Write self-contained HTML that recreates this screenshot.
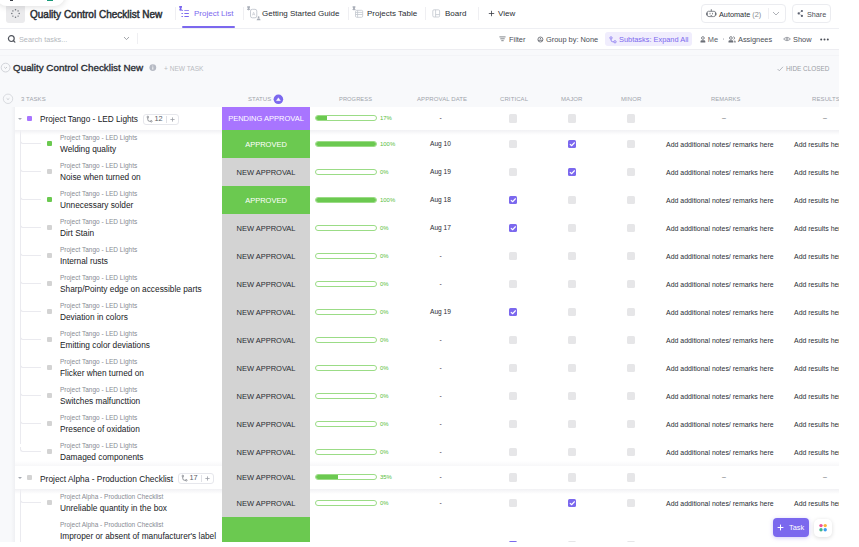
<!DOCTYPE html>
<html><head><meta charset="utf-8"><style>*{box-sizing:border-box;margin:0;padding:0}
html,body{width:859px;height:547px;overflow:hidden;background:#fff;font-family:"Liberation Sans",sans-serif;color:#2a2e34}
#app{position:absolute;left:0;top:0;width:839px;height:542px;overflow:hidden;background:#f8f9fb}
.abs{position:absolute;white-space:nowrap}
#top{position:absolute;left:0;top:0;width:839px;height:29px;background:#fff;border-bottom:1px solid #eeeff3}
#tool{position:absolute;left:0;top:29px;width:839px;height:21px;background:#fff;border-bottom:1px solid #ededf1}
.t8{font-size:8px;line-height:10px}
.vsep{position:absolute;width:1px;background:#efeff2}
#table{position:absolute;left:0;top:0;width:839px;height:542px}
.row{position:absolute;left:15px;width:824px;background:#fff}
.grp{}
.gshadow{position:absolute;z-index:1;left:15px;width:824px;height:5px;background:linear-gradient(#f1f1f4,rgba(255,255,255,0))}
.gshadow2{position:absolute;z-index:1;left:15px;width:824px;height:5px;background:linear-gradient(rgba(255,255,255,0),#f7f7f9)}
.vline{position:absolute;left:20px;width:1px;background:#eaeaef}
.tree{position:absolute;left:20px;width:21px;border-left:1px solid #eaeaef;border-bottom:1px solid #eaeaef;border-bottom-left-radius:3px}
.tree2{position:absolute;left:20px;width:1px;border-left:1px solid #eaeaef}
.sq{position:absolute;width:5px;height:5px;border-radius:1px}
.gsq{position:absolute;left:27px;width:5px;height:5px;border-radius:1px}
.caret{position:absolute;left:17.8px;width:0;height:0;border-left:2.4px solid transparent;border-right:2.4px solid transparent;border-top:2.8px solid #a4a8b0}
.sub{position:absolute;left:60px;font-size:6.5px;line-height:8px;color:#878b93;white-space:nowrap}
.tname{position:absolute;left:60px;font-size:8.3px;line-height:10px;color:#202226;white-space:nowrap}
.gname{position:absolute;left:40px;font-size:8.35px;line-height:10px;color:#202226;white-space:nowrap}
.badge{position:absolute;height:11px;border:0.8px solid #e6e7ec;border-radius:3px;background:#fff}
.bn{position:absolute;font-size:7.4px;line-height:8px;color:#5a5e66;white-space:nowrap}
.bs{position:absolute;width:0.8px;height:7px;background:#e0e1e6}
.st{position:absolute;z-index:2;left:222px;width:88px;text-align:center;font-size:7.5px;display:flex;align-items:center;justify-content:center;white-space:nowrap}
.pb{position:absolute;left:315px;width:62px;height:6px;border:0.8px solid #9bdc86;border-radius:3px;background:#fff;overflow:hidden}
.pbf{height:100%;background:#6bc950}
.pct{position:absolute;left:380px;font-size:5.95px;line-height:8px;color:#58bd3c;white-space:nowrap}
.date{position:absolute;left:400px;width:81px;text-align:center;font-size:6.6px;line-height:8px;color:#2a2e34;white-space:nowrap}
.cb{position:absolute;width:8.4px;height:8.4px;border-radius:1.5px;background:#e6e6e8}
.cb.on{background:#7b68ee}
.cb svg{position:absolute;left:0;top:0;width:8.5px;height:8.5px}
.rem{position:absolute;margin-top:0.5px;left:666px;font-size:6.95px;line-height:8px;color:#2a2e34;white-space:nowrap}
.res{position:absolute;margin-top:0.5px;left:794px;font-size:6.95px;line-height:8px;color:#2a2e34;white-space:nowrap}
.dash{position:absolute;font-size:7px;line-height:8px;color:#6c7077}
.hdr{position:absolute;top:95px;font-size:6px;line-height:8px;color:#a0a4ab;white-space:nowrap;letter-spacing:0.1px}
.ic{position:absolute;overflow:visible}
</style></head>
<body>
<div id="app">
  <div id="top">
    <div style="position:absolute;left:6px;top:4px;width:19px;height:19px;border-radius:3px;background:#ebebed"></div>
    <svg class="ic" style="left:10px;top:8px" width="11" height="11" viewBox="0 0 11 11"><g fill="#6a6e76"><circle cx="5.5" cy="1.8" r="0.75"/><circle cx="5.5" cy="9.2" r="0.75"/><circle cx="1.8" cy="5.5" r="0.75"/><circle cx="9.2" cy="5.5" r="0.75"/><circle cx="2.9" cy="2.9" r="0.7"/><circle cx="8.1" cy="2.9" r="0.7"/><circle cx="2.9" cy="8.1" r="0.7"/><circle cx="8.1" cy="8.1" r="0.7"/></g></svg>
    <div class="abs" style="left:30px;top:9px;font-size:10px;line-height:11px;-webkit-text-stroke:0.45px #2a2e34;color:#2a2e34">Quality Control Checklist New</div>
    <div class="vsep" style="left:175px;top:7px;height:13px"></div>
    <svg class="ic" style="left:178px;top:5px" width="12" height="13" viewBox="0 0 12 13"><g fill="#7b68ee"><path d="M1.2 1 H4 V2.2 L3.4 3.3 V4.6 H4.2 V5.3 H3 L2.6 6.2 L2.2 5.3 H1 V4.6 H1.8 V3.3 L1.2 2.2Z"/><rect x="3.3" y="5.2" width="1.8" height="0.9" rx="0.4"/><rect x="3.3" y="8.1" width="1.8" height="0.9" rx="0.4"/><rect x="3.3" y="11" width="1.8" height="0.9" rx="0.4"/><rect x="6.2" y="5.2" width="4.8" height="0.9" rx="0.4"/><rect x="6.2" y="8.1" width="4.8" height="0.9" rx="0.4"/><rect x="6.2" y="11" width="4.8" height="0.9" rx="0.4"/></g></svg>
    <div class="abs t8" style="left:194px;top:9px;color:#7b68ee">Project List</div>
    <div style="position:absolute;left:182px;top:26px;width:53px;height:2px;border-radius:1px;background:#7b68ee"></div>
    <div class="vsep" style="left:243px;top:7px;height:13px"></div>
    <svg class="ic" style="left:246px;top:5px" width="16" height="16" viewBox="0 0 16 16"><g fill="#a9aeb8"><path d="M1.2 1.2 H4 V2.2 L3.5 3.2 V4.2 H4.2 V4.9 H3 L2.6 5.8 L2.2 4.9 H1 V4.2 H1.7 V3.2 L1.2 2.2Z"/></g><rect x="4.5" y="4.3" width="6.3" height="8.5" rx="1.8" fill="none" stroke="#c2c6ce" stroke-width="0.9"/><path d="M6.4 10.4 L7.6 7.2 L8.9 10.4 M6.8 9.4 H8.5" fill="none" stroke="#c9ccd3" stroke-width="0.7"/><g fill="#a9aeb8"><circle cx="12.6" cy="12.2" r="0.9"/><path d="M10.6 15.2 Q10.8 13.3 12.6 13.3 Q14.4 13.3 14.6 15.2Z"/></g></svg>
    <div class="abs t8" style="left:262px;top:9px">Getting Started Guide</div>
    <div class="vsep" style="left:348px;top:7px;height:13px"></div>
    <svg class="ic" style="left:352px;top:5px" width="12" height="13" viewBox="0 0 12 13"><g fill="#a9aeb8"><path d="M0.6 1.2 H3.4 V2.2 L2.9 3.2 V4.2 H3.6 V4.9 H2.4 L2 5.8 L1.6 4.9 H0.4 V4.2 H1.1 V3.2 L0.6 2.2Z"/></g><g fill="none" stroke="#c2c6ce" stroke-width="0.8"><rect x="3.5" y="5.3" width="7.2" height="7" rx="1.2"/><path d="M3.5 7.4 H10.7 M3.5 9.5 H10.7 M5.6 5.3 V12.3"/></g></svg>
    <div class="abs t8" style="left:367px;top:9px">Projects Table</div>
    <div class="vsep" style="left:425px;top:7px;height:13px"></div>
    <svg class="ic" style="left:432px;top:9px" width="9" height="9" viewBox="0 0 9 9"><g fill="none" stroke="#c2c6ce" stroke-width="0.8"><rect x="0.8" y="0.8" width="6.8" height="7.2" rx="1.2"/><path d="M3.6 0.8 V8 M3.6 5.6 H7.6"/></g></svg>
    <div class="abs t8" style="left:445px;top:9px">Board</div>
    <div class="vsep" style="left:478px;top:7px;height:13px"></div>
    <svg class="ic" style="left:488px;top:10px" width="7" height="7" viewBox="0 0 7 7"><path d="M3.5 0.8 V6.2 M0.8 3.5 H6.2" stroke="#3a3e46" stroke-width="0.8"/></svg><div class="abs t8" style="left:498px;top:9px">View</div>
    <div style="position:absolute;left:701px;top:4px;width:85px;height:19px;border:1px solid #ebecf0;border-radius:4px"></div>
    <svg class="ic" style="left:705.5px;top:8.5px" width="11" height="9" viewBox="0 0 11 9"><g fill="none" stroke="#6e727a"><path d="M2.4 2.3 H8.2 Q9.6 2.3 9.6 4.2 V5.6 Q9.6 7.6 7.6 7.6 H3 Q1 7.6 1 5.6 V4.2 Q1 2.3 2.4 2.3Z" stroke-width="0.85"/><path d="M5.3 2.3 V0.9" stroke-width="0.8"/><path d="M0.9 3.8 V6.2 M9.7 3.8 V6.2" stroke-width="1.5"/></g><circle cx="5.3" cy="0.8" r="0.6" fill="#6e727a"/><g fill="#6e727a"><rect x="3.6" y="3.7" width="0.8" height="1.7" rx="0.3"/><rect x="6.2" y="3.7" width="0.8" height="1.7" rx="0.3"/><rect x="4.5" y="6" width="1.6" height="0.7" rx="0.3"/></g></svg>
    <div class="abs" style="left:719px;top:9.6px;font-size:7.3px;line-height:9px;color:#2a2e34">Automate <span style="color:#878b92">(2)</span></div>
    <div class="vsep" style="left:768px;top:8px;height:11px"></div>
    <svg class="ic" style="left:772px;top:11px" width="8" height="5" viewBox="0 0 8 5"><path d="M1 1 L4 4 L7 1" fill="none" stroke="#9a9ea6" stroke-width="0.8"/></svg>
    <div style="position:absolute;left:792px;top:4px;width:39px;height:19px;border:1px solid #ebecf0;border-radius:4px"></div>
    <svg class="ic" style="left:797px;top:9px" width="7" height="9" viewBox="0 0 7 9"><path d="M1.7 4.4 L4.9 2 M1.7 4.4 L4.9 6.9" stroke="#8a8e96" stroke-width="0.5"/><g fill="#5c6170"><circle cx="1.7" cy="4.4" r="1.15"/><circle cx="4.9" cy="2" r="1.1"/><circle cx="4.9" cy="6.9" r="1.1"/></g></svg>
    <div class="abs" style="left:807px;top:9.6px;font-size:7.2px;line-height:9px;color:#4a4e56">Share</div>
  </div>
  <div style="position:absolute;left:0;top:55px;width:839px;height:1px;background:#f3f4f7"></div>
  <div id="tool">
    <svg class="ic" style="left:7px;top:5px" width="10" height="10" viewBox="0 0 10 10"><circle cx="4.3" cy="4.6" r="2.9" fill="none" stroke="#50545c" stroke-width="1.2"/><path d="M6.4 6.7 L7.9 8.2" stroke="#50545c" stroke-width="1.2" stroke-linecap="round"/></svg>
    <div class="abs" style="left:19px;top:6px;font-size:7.3px;line-height:9px;color:#b4b7bd">Search tasks...</div>
    <svg class="ic" style="left:123px;top:7px" width="7" height="5" viewBox="0 0 7 5"><path d="M1 1 L3.5 3.6 L6 1" fill="none" stroke="#8a8e96" stroke-width="0.8"/></svg>
    <div class="vsep" style="left:137px;top:4px;height:11px"></div>
    <svg class="ic" style="left:499px;top:7px" width="7" height="6" viewBox="0 0 7 6"><path d="M0.8 0.9 H6.2 M1.7 2.8 H5.3 M2.7 4.7 H4.3" stroke="#6e727a" stroke-width="0.85" stroke-linecap="round"/></svg>
    <div class="abs" style="left:509px;top:6px;font-size:7.4px;line-height:9px;color:#4a4e55">Filter</div>
    <svg class="ic" style="left:537px;top:7px" width="7" height="7" viewBox="0 0 7 7"><g fill="none" stroke="#5e626a" stroke-width="0.8"><circle cx="3.4" cy="3.5" r="2.5"/><path d="M1 4.3 H5.8"/></g><path d="M2.5 3.2 L3.4 1.8 L4.3 3.2Z" fill="#5e626a"/></svg>
    <div class="abs" style="left:546px;top:6px;font-size:7.4px;line-height:9px;color:#4a4e55">Group by: None</div>
    <div style="position:absolute;left:605px;top:3px;width:87px;height:14px;border-radius:3px;background:#f0edfd"></div>
    <svg class="ic" style="left:608.5px;top:6.5px" width="9" height="8" viewBox="0 0 9 8"><g fill="none" stroke="#8c7cf0" stroke-width="0.85"><circle cx="2" cy="1.9" r="1.15"/><circle cx="6" cy="5.8" r="1.15"/><path d="M2 3.05 V4 Q2 5.8 3.8 5.8 H4.85"/></g></svg>
    <div class="abs" style="left:619px;top:6px;font-size:7.4px;line-height:9px;color:#7b68ee">Subtasks: Expand All</div>
    <svg class="ic" style="left:699.5px;top:6.5px" width="6" height="7" viewBox="0 0 6 7"><circle cx="2.9" cy="2" r="1.35" fill="none" stroke="#6b6f77" stroke-width="0.85"/><path d="M0.5 6.6 V5.6 Q0.5 4.3 1.8 4.3 H4 Q5.3 4.3 5.3 5.6 V6.6Z" fill="#6b6f77"/></svg>
    <div class="abs" style="left:707.8px;top:6px;font-size:7.4px;line-height:9px;color:#5a5e66">Me</div>
    <div style="position:absolute;left:722.5px;top:9.2px;width:1.5px;height:1.5px;border-radius:1px;background:#c8cbd1"></div>
    <svg class="ic" style="left:727.5px;top:6.5px" width="9" height="7" viewBox="0 0 9 7"><circle cx="2.9" cy="2" r="1.35" fill="none" stroke="#6b6f77" stroke-width="0.85"/><path d="M0.5 6.6 V5.6 Q0.5 4.3 1.8 4.3 H4 Q5.3 4.3 5.3 5.6 V6.6Z" fill="#6b6f77"/><path d="M5.3 0.7 Q6.6 1 6.6 2.1 Q6.6 3.1 5.6 3.4" fill="none" stroke="#6b6f77" stroke-width="0.8"/><path d="M6.2 4.4 Q7.6 4.5 7.6 5.6 V6.6 H6.4Z" fill="#6b6f77"/></svg>
    <div class="abs" style="left:738px;top:6px;font-size:7.4px;line-height:9px;color:#4a4e55">Assignees</div>
    <svg class="ic" style="left:783px;top:7px" width="8" height="6" viewBox="0 0 8 6"><g fill="none" stroke="#8a8e96" stroke-width="0.8"><path d="M0.6 3 Q4 -0.4 7.4 3 Q4 6.4 0.6 3Z"/><circle cx="4" cy="3" r="1"/></g></svg>
    <div class="abs" style="left:793px;top:6px;font-size:7.4px;line-height:9px;color:#4a4e55">Show</div>
    <svg class="ic" style="left:819.8px;top:8.5px" width="9" height="3" viewBox="0 0 9 3"><g fill="#4a4e56"><circle cx="1.2" cy="1.5" r="1"/><circle cx="4.5" cy="1.5" r="1"/><circle cx="7.8" cy="1.5" r="1"/></g></svg>
  </div>
  <svg class="ic" style="left:0px;top:62px" width="12" height="12" viewBox="0 0 12 12"><circle cx="5.6" cy="5.6" r="4.4" fill="none" stroke="#c6c9cf" stroke-width="0.8"/><path d="M4.2 5 L5.6 6.4 L7 5" fill="none" stroke="#b0b4ba" stroke-width="0.7"/></svg>
  <div class="abs" style="left:13px;top:62px;font-size:9.85px;line-height:11px;-webkit-text-stroke:0.35px #2a2e34;color:#2a2e34">Quality Control Checklist New</div>
  <svg class="ic" style="left:149px;top:64px" width="8" height="8" viewBox="0 0 8 8"><circle cx="3.8" cy="3.6" r="3.4" fill="#b6bac4"/><path d="M3.8 3.2 V5.6" stroke="#fff" stroke-width="0.9"/><circle cx="3.8" cy="2.1" r="0.5" fill="#fff"/></svg>
  <div class="abs" style="left:164px;top:64.6px;font-size:6.6px;line-height:8px;color:#b8bbc1">+ NEW TASK</div>
  <svg class="ic" style="left:777px;top:65.5px" width="7" height="6" viewBox="0 0 7 6"><path d="M0.6 3 L2.3 4.8 L6 0.8" fill="none" stroke="#a4a8b0" stroke-width="0.8"/></svg>
  <div class="abs" style="left:786px;top:64.6px;font-size:6.4px;line-height:8px;color:#9a9ea5">HIDE CLOSED</div>
  <svg class="ic" style="left:2px;top:93px" width="12" height="12" viewBox="0 0 12 12"><circle cx="6" cy="5.8" r="4.7" fill="none" stroke="#d0d3d8" stroke-width="0.8"/><path d="M4.6 5.3 L6 6.6 L7.4 5.3" fill="none" stroke="#b8bcc2" stroke-width="0.7"/></svg>
  <div class="hdr" style="left:21px">3 TASKS</div>
  <div class="hdr" style="left:248px">STATUS</div>
  <svg class="ic" style="left:273px;top:94px" width="11" height="11" viewBox="0 0 11 11"><circle cx="5.4" cy="5.3" r="4.8" fill="#7b68ee"/><path d="M3.3 6.7 L5.4 3.7 L7.5 6.7Z" fill="#fff" stroke="#fff" stroke-width="0.3" stroke-linejoin="round"/></svg>
  <div class="hdr" style="left:339px;font-size:5.7px">PROGRESS</div>
  <div class="hdr" style="left:417px">APPROVAL DATE</div>
  <div class="hdr" style="left:500px">CRITICAL</div>
  <div class="hdr" style="left:561px">MAJOR</div>
  <div class="hdr" style="left:621px">MINOR</div>
  <div class="hdr" style="left:711px;font-size:5.8px">REMARKS</div>
  <div class="hdr" style="left:812px">RESULTS</div>
  <div id="table"><div class="row grp" style="top:107px;height:23px"></div><div class="caret" style="top:117.5px"></div><div class="gshadow" style="top:130px"></div><div class="gsq" style="top:116px;background:#a875ff"></div><div class="gname" style="top:114.5px;font-size:8.25px">Project Tango - LED Lights</div><div class="badge" style="left:143px;top:113.5px;width:36px"></div><svg class="ic" style="left:146px;top:116px" width="7" height="7" viewBox="0 0 7 7"><path d="M1.8 1.6 V3.6 Q1.8 5.3 3.6 5.3 H4.6" fill="none" stroke="#70747c" stroke-width="0.75"/><circle cx="1.8" cy="1" r="0.8" fill="#fff" stroke="#70747c" stroke-width="0.7"/><circle cx="5.3" cy="5.3" r="0.8" fill="#fff" stroke="#70747c" stroke-width="0.7"/></svg><div class="bn" style="left:154.5px;top:115px">12</div><div class="bs" style="left:166px;top:115.5px"></div><svg class="ic" style="left:170px;top:116.5px" width="5" height="5" viewBox="0 0 5 5"><path d="M2.5 0.4 V4.6 M0.4 2.5 H4.6" stroke="#9a9ea6" stroke-width="0.8"/></svg><div class="st" style="top:107px;height:23px;background:#a875ff;color:#fff">PENDING APPROVAL</div><div class="pb" style="top:115px"><div class="pbf" style="width:11px"></div></div><div class="pct" style="top:114px">17%</div><div class="date" style="top:114px">-</div><div class="cb" style="left:508.5px;top:114.4px"></div><div class="cb" style="left:567.5px;top:114.4px"></div><div class="cb" style="left:626.5px;top:114.4px"></div><div class="dash" style="left:722px;top:114px">–</div><div class="dash" style="left:823px;top:114px">–</div><div class="row" style="top:130px;height:28px"></div><div class="tree" style="top:139px;height:5px"></div><div class="sq" style="left:47px;top:141px;background:#6bc950"></div><div class="sub" style="top:133.6px">Project Tango - LED Lights</div><div class="tname" style="top:143.6px">Welding quality</div><div class="st" style="top:130px;height:28px;background:#6bc950;color:#fff">APPROVED</div><div class="pb" style="top:141px"><div class="pbf" style="width:62px"></div></div><div class="pct" style="top:140px">100%</div><div class="date" style="top:140px">Aug 10</div><div class="cb" style="left:508.5px;top:139.6px"></div><div class="cb on" style="left:567.5px;top:139.6px"><svg width="9" height="9" viewBox="0 0 9 9"><path d="M2.3 4.6 L3.8 6.1 L6.8 2.9" fill="none" stroke="#fff" stroke-width="1.2" stroke-linecap="round" stroke-linejoin="round"/></svg></div><div class="cb" style="left:626.5px;top:139.6px"></div><div class="rem" style="top:140px">Add additional notes/ remarks here</div><div class="res" style="top:140px">Add results here</div><div class="row" style="top:158px;height:28px"></div><div class="tree" style="top:167px;height:5px"></div><div class="sq" style="left:47px;top:169px;background:#d3d3d3"></div><div class="sub" style="top:161.6px">Project Tango - LED Lights</div><div class="tname" style="top:171.6px">Noise when turned on</div><div class="st" style="top:158px;height:28px;background:#d3d3d3;color:#2a2e34">NEW APPROVAL</div><div class="pb" style="top:169px"><div class="pbf" style="width:0px"></div></div><div class="pct" style="top:168px">0%</div><div class="date" style="top:168px">Aug 19</div><div class="cb" style="left:508.5px;top:167.6px"></div><div class="cb on" style="left:567.5px;top:167.6px"><svg width="9" height="9" viewBox="0 0 9 9"><path d="M2.3 4.6 L3.8 6.1 L6.8 2.9" fill="none" stroke="#fff" stroke-width="1.2" stroke-linecap="round" stroke-linejoin="round"/></svg></div><div class="cb" style="left:626.5px;top:167.6px"></div><div class="rem" style="top:168px">Add additional notes/ remarks here</div><div class="res" style="top:168px">Add results here</div><div class="row" style="top:186px;height:28px"></div><div class="tree" style="top:195px;height:5px"></div><div class="sq" style="left:47px;top:197px;background:#6bc950"></div><div class="sub" style="top:189.6px">Project Tango - LED Lights</div><div class="tname" style="top:199.6px">Unnecessary solder</div><div class="st" style="top:186px;height:28px;background:#6bc950;color:#fff">APPROVED</div><div class="pb" style="top:197px"><div class="pbf" style="width:62px"></div></div><div class="pct" style="top:196px">100%</div><div class="date" style="top:196px">Aug 18</div><div class="cb on" style="left:508.5px;top:195.6px"><svg width="9" height="9" viewBox="0 0 9 9"><path d="M2.3 4.6 L3.8 6.1 L6.8 2.9" fill="none" stroke="#fff" stroke-width="1.2" stroke-linecap="round" stroke-linejoin="round"/></svg></div><div class="cb" style="left:567.5px;top:195.6px"></div><div class="cb" style="left:626.5px;top:195.6px"></div><div class="rem" style="top:196px">Add additional notes/ remarks here</div><div class="res" style="top:196px">Add results here</div><div class="row" style="top:214px;height:28px"></div><div class="tree" style="top:223px;height:5px"></div><div class="sq" style="left:47px;top:225px;background:#d3d3d3"></div><div class="sub" style="top:217.6px">Project Tango - LED Lights</div><div class="tname" style="top:227.6px">Dirt Stain</div><div class="st" style="top:214px;height:28px;background:#d3d3d3;color:#2a2e34">NEW APPROVAL</div><div class="pb" style="top:225px"><div class="pbf" style="width:0px"></div></div><div class="pct" style="top:224px">0%</div><div class="date" style="top:224px">Aug 17</div><div class="cb on" style="left:508.5px;top:223.6px"><svg width="9" height="9" viewBox="0 0 9 9"><path d="M2.3 4.6 L3.8 6.1 L6.8 2.9" fill="none" stroke="#fff" stroke-width="1.2" stroke-linecap="round" stroke-linejoin="round"/></svg></div><div class="cb" style="left:567.5px;top:223.6px"></div><div class="cb" style="left:626.5px;top:223.6px"></div><div class="rem" style="top:224px">Add additional notes/ remarks here</div><div class="res" style="top:224px">Add results here</div><div class="row" style="top:242px;height:28px"></div><div class="tree" style="top:251px;height:5px"></div><div class="sq" style="left:47px;top:253px;background:#d3d3d3"></div><div class="sub" style="top:245.6px">Project Tango - LED Lights</div><div class="tname" style="top:255.6px">Internal rusts</div><div class="st" style="top:242px;height:28px;background:#d3d3d3;color:#2a2e34">NEW APPROVAL</div><div class="pb" style="top:253px"><div class="pbf" style="width:0px"></div></div><div class="pct" style="top:252px">0%</div><div class="date" style="top:252px">-</div><div class="cb" style="left:508.5px;top:251.6px"></div><div class="cb" style="left:567.5px;top:251.6px"></div><div class="cb" style="left:626.5px;top:251.6px"></div><div class="rem" style="top:252px">Add additional notes/ remarks here</div><div class="res" style="top:252px">Add results here</div><div class="row" style="top:270px;height:28px"></div><div class="tree" style="top:279px;height:5px"></div><div class="sq" style="left:47px;top:281px;background:#d3d3d3"></div><div class="sub" style="top:273.6px">Project Tango - LED Lights</div><div class="tname" style="top:283.6px">Sharp/Pointy edge on accessible parts</div><div class="st" style="top:270px;height:28px;background:#d3d3d3;color:#2a2e34">NEW APPROVAL</div><div class="pb" style="top:281px"><div class="pbf" style="width:0px"></div></div><div class="pct" style="top:280px">0%</div><div class="date" style="top:280px">-</div><div class="cb" style="left:508.5px;top:279.6px"></div><div class="cb" style="left:567.5px;top:279.6px"></div><div class="cb" style="left:626.5px;top:279.6px"></div><div class="rem" style="top:280px">Add additional notes/ remarks here</div><div class="res" style="top:280px">Add results here</div><div class="row" style="top:298px;height:28px"></div><div class="tree" style="top:307px;height:5px"></div><div class="sq" style="left:47px;top:309px;background:#d3d3d3"></div><div class="sub" style="top:301.6px">Project Tango - LED Lights</div><div class="tname" style="top:311.6px">Deviation in colors</div><div class="st" style="top:298px;height:28px;background:#d3d3d3;color:#2a2e34">NEW APPROVAL</div><div class="pb" style="top:309px"><div class="pbf" style="width:0px"></div></div><div class="pct" style="top:308px">0%</div><div class="date" style="top:308px">Aug 19</div><div class="cb on" style="left:508.5px;top:307.6px"><svg width="9" height="9" viewBox="0 0 9 9"><path d="M2.3 4.6 L3.8 6.1 L6.8 2.9" fill="none" stroke="#fff" stroke-width="1.2" stroke-linecap="round" stroke-linejoin="round"/></svg></div><div class="cb" style="left:567.5px;top:307.6px"></div><div class="cb" style="left:626.5px;top:307.6px"></div><div class="rem" style="top:308px">Add additional notes/ remarks here</div><div class="res" style="top:308px">Add results here</div><div class="row" style="top:326px;height:28px"></div><div class="tree" style="top:335px;height:5px"></div><div class="sq" style="left:47px;top:337px;background:#d3d3d3"></div><div class="sub" style="top:329.6px">Project Tango - LED Lights</div><div class="tname" style="top:339.6px">Emitting color deviations</div><div class="st" style="top:326px;height:28px;background:#d3d3d3;color:#2a2e34">NEW APPROVAL</div><div class="pb" style="top:337px"><div class="pbf" style="width:0px"></div></div><div class="pct" style="top:336px">0%</div><div class="date" style="top:336px">-</div><div class="cb" style="left:508.5px;top:335.6px"></div><div class="cb" style="left:567.5px;top:335.6px"></div><div class="cb" style="left:626.5px;top:335.6px"></div><div class="rem" style="top:336px">Add additional notes/ remarks here</div><div class="res" style="top:336px">Add results here</div><div class="row" style="top:354px;height:28px"></div><div class="tree" style="top:363px;height:5px"></div><div class="sq" style="left:47px;top:365px;background:#d3d3d3"></div><div class="sub" style="top:357.6px">Project Tango - LED Lights</div><div class="tname" style="top:367.6px">Flicker when turned on</div><div class="st" style="top:354px;height:28px;background:#d3d3d3;color:#2a2e34">NEW APPROVAL</div><div class="pb" style="top:365px"><div class="pbf" style="width:0px"></div></div><div class="pct" style="top:364px">0%</div><div class="date" style="top:364px">-</div><div class="cb" style="left:508.5px;top:363.6px"></div><div class="cb" style="left:567.5px;top:363.6px"></div><div class="cb" style="left:626.5px;top:363.6px"></div><div class="rem" style="top:364px">Add additional notes/ remarks here</div><div class="res" style="top:364px">Add results here</div><div class="row" style="top:382px;height:28px"></div><div class="tree" style="top:391px;height:5px"></div><div class="sq" style="left:47px;top:393px;background:#d3d3d3"></div><div class="sub" style="top:385.6px">Project Tango - LED Lights</div><div class="tname" style="top:395.6px">Switches malfuncttion</div><div class="st" style="top:382px;height:28px;background:#d3d3d3;color:#2a2e34">NEW APPROVAL</div><div class="pb" style="top:393px"><div class="pbf" style="width:0px"></div></div><div class="pct" style="top:392px">0%</div><div class="date" style="top:392px">-</div><div class="cb" style="left:508.5px;top:391.6px"></div><div class="cb" style="left:567.5px;top:391.6px"></div><div class="cb" style="left:626.5px;top:391.6px"></div><div class="rem" style="top:392px">Add additional notes/ remarks here</div><div class="res" style="top:392px">Add results here</div><div class="row" style="top:410px;height:28px"></div><div class="tree" style="top:419px;height:5px"></div><div class="sq" style="left:47px;top:421px;background:#d3d3d3"></div><div class="sub" style="top:413.6px">Project Tango - LED Lights</div><div class="tname" style="top:423.6px">Presence of oxidation</div><div class="st" style="top:410px;height:28px;background:#d3d3d3;color:#2a2e34">NEW APPROVAL</div><div class="pb" style="top:421px"><div class="pbf" style="width:0px"></div></div><div class="pct" style="top:420px">0%</div><div class="date" style="top:420px">-</div><div class="cb" style="left:508.5px;top:419.6px"></div><div class="cb" style="left:567.5px;top:419.6px"></div><div class="cb" style="left:626.5px;top:419.6px"></div><div class="rem" style="top:420px">Add additional notes/ remarks here</div><div class="res" style="top:420px">Add results here</div><div class="row" style="top:438px;height:28px"></div><div class="tree" style="top:447px;height:5px"></div><div class="sq" style="left:47px;top:449px;background:#d3d3d3"></div><div class="sub" style="top:441.6px">Project Tango - LED Lights</div><div class="tname" style="top:451.6px">Damaged components</div><div class="st" style="top:438px;height:28px;background:#d3d3d3;color:#2a2e34">NEW APPROVAL</div><div class="pb" style="top:449px"><div class="pbf" style="width:0px"></div></div><div class="pct" style="top:448px">0%</div><div class="date" style="top:448px">-</div><div class="cb" style="left:508.5px;top:447.6px"></div><div class="cb" style="left:567.5px;top:447.6px"></div><div class="cb" style="left:626.5px;top:447.6px"></div><div class="rem" style="top:448px">Add additional notes/ remarks here</div><div class="res" style="top:448px">Add results here</div><div class="row grp" style="top:466px;height:23px"></div><div class="caret" style="top:476.5px"></div><div class="gshadow" style="top:489px"></div><div class="gshadow2" style="top:461px"></div><div class="gsq" style="top:475px;background:#d3d3d3"></div><div class="gname" style="top:473.5px;font-size:8.4px">Project Alpha - Production Checklist</div><div class="badge" style="left:178px;top:472.5px;width:36px"></div><svg class="ic" style="left:181px;top:475px" width="7" height="7" viewBox="0 0 7 7"><path d="M1.8 1.6 V3.6 Q1.8 5.3 3.6 5.3 H4.6" fill="none" stroke="#70747c" stroke-width="0.75"/><circle cx="1.8" cy="1" r="0.8" fill="#fff" stroke="#70747c" stroke-width="0.7"/><circle cx="5.3" cy="5.3" r="0.8" fill="#fff" stroke="#70747c" stroke-width="0.7"/></svg><div class="bn" style="left:189.5px;top:474px">17</div><div class="bs" style="left:201px;top:474.5px"></div><svg class="ic" style="left:205px;top:475.5px" width="5" height="5" viewBox="0 0 5 5"><path d="M2.5 0.4 V4.6 M0.4 2.5 H4.6" stroke="#9a9ea6" stroke-width="0.8"/></svg><div class="st" style="top:466px;height:23px;background:#d3d3d3;color:#2a2e34">NEW APPROVAL</div><div class="pb" style="top:474px"><div class="pbf" style="width:22px"></div></div><div class="pct" style="top:473px">35%</div><div class="date" style="top:473px">-</div><div class="cb" style="left:508.5px;top:473.4px"></div><div class="cb" style="left:567.5px;top:473.4px"></div><div class="cb" style="left:626.5px;top:473.4px"></div><div class="dash" style="left:722px;top:473px">–</div><div class="dash" style="left:823px;top:473px">–</div><div class="row" style="top:489px;height:28px"></div><div class="tree" style="top:498px;height:5px"></div><div class="sq" style="left:47px;top:500px;background:#d3d3d3"></div><div class="sub" style="top:492.6px">Project Alpha - Production Checklist</div><div class="tname" style="top:502.6px">Unreliable quantity in the box</div><div class="st" style="top:489px;height:28px;background:#d3d3d3;color:#2a2e34">NEW APPROVAL</div><div class="pb" style="top:500px"><div class="pbf" style="width:0px"></div></div><div class="pct" style="top:499px">0%</div><div class="date" style="top:499px">-</div><div class="cb" style="left:508.5px;top:498.6px"></div><div class="cb on" style="left:567.5px;top:498.6px"><svg width="9" height="9" viewBox="0 0 9 9"><path d="M2.3 4.6 L3.8 6.1 L6.8 2.9" fill="none" stroke="#fff" stroke-width="1.2" stroke-linecap="round" stroke-linejoin="round"/></svg></div><div class="cb" style="left:626.5px;top:498.6px"></div><div class="rem" style="top:499px">Add additional notes/ remarks here</div><div class="res" style="top:499px">Add results here</div><div class="row" style="top:517px;height:40px"></div><div class="sub" style="top:520.5px">Project Alpha - Production Checklist</div><div class="tname" style="top:530.8px">Improper or absent of manufacturer's label</div><div class="st" style="top:517px;height:40px;background:#6bc950"></div><div class="cb on" style="left:508.5px;top:541px"><svg width="9" height="9" viewBox="0 0 9 9"><path d="M2.3 4.6 L3.8 6.1 L6.8 2.9" fill="none" stroke="#fff" stroke-width="1.2" stroke-linecap="round" stroke-linejoin="round"/></svg></div><div class="cb" style="left:567.5px;top:541px"></div><div class="cb" style="left:626.5px;top:541px"></div><div class="vline" style="top:130px;height:314px"></div><div class="vline" style="top:489px;height:60px"></div></div>
  <div style="position:absolute;left:11px;top:107px;width:4px;height:440px;background:linear-gradient(90deg,rgba(240,241,244,0),#eff0f3)"></div>
</div>
<div style="position:absolute;left:-4px;top:-20px;width:69px;height:25.8px;border-radius:11px;background:#fff;box-shadow:0 1px 6px rgba(0,0,0,0.13)">
  <div style="position:absolute;left:14px;top:20px;width:3px;height:1px;background:#3a3e46"></div>
  <div style="position:absolute;left:51px;top:19px;width:6px;height:2px;background:#1a9a7a"></div>
</div>
<div style="position:absolute;left:773px;top:518px;width:36px;height:19px;border-radius:4px;background:#7b68ee;box-shadow:0 1px 4px rgba(123,104,238,0.35)"></div>
<svg class="ic" style="left:777px;top:524px" width="7" height="7" viewBox="0 0 7 7"><path d="M3.5 0.6 V6.4 M0.6 3.5 H6.4" stroke="#fff" stroke-width="1"/></svg>
<div class="abs" style="left:789px;top:523px;font-size:7.4px;line-height:9px;color:#fff">Task</div>
<div style="position:absolute;left:814px;top:519px;width:18px;height:18px;border-radius:5px;background:#fff;box-shadow:0 1px 4px rgba(0,0,0,0.14)"></div>
<svg class="ic" style="left:818px;top:523px" width="10" height="10" viewBox="0 0 10 10"><circle cx="3" cy="2.6" r="1.7" fill="#f0509a"/><circle cx="7.2" cy="2.6" r="1.7" fill="#f9b23a"/><circle cx="3" cy="6.7" r="1.7" fill="#3fb589"/><circle cx="7.2" cy="6.7" r="1.7" fill="#3c9df0"/></svg>
</body></html>
